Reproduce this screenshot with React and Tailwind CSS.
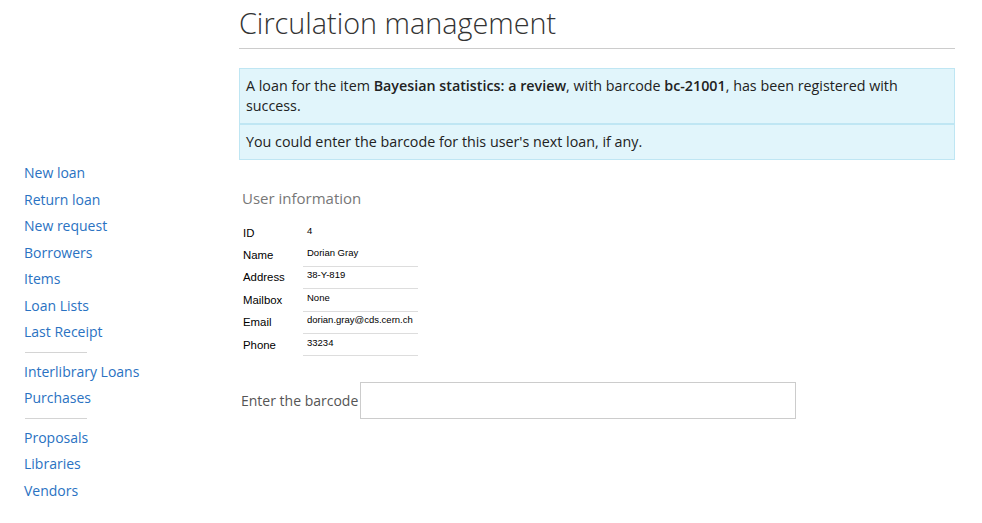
import React, { useState } from "react";

const groups = [
  ["New loan", "Return loan", "New request", "Borrowers", "Items", "Loan Lists", "Last Receipt"],
  ["Interlibrary Loans", "Purchases"],
  ["Proposals", "Libraries", "Vendors"],
];

const userInfo = [
  ["ID", "4"],
  ["Name", "Dorian Gray"],
  ["Address", "38-Y-819"],
  ["Mailbox", "None"],
  ["Email", "dorian.gray@cds.cern.ch"],
  ["Phone", "33234"],
];

const Sidebar = () => (
  <nav className="w-[239px] shrink-0 pl-[24px] pt-[160px]">
    {groups.map((links, i) => (
      <div key={i}>
        {i > 0 && <div className="my-[6px] ml-[1px] h-px w-[62px] bg-[#d4d4d4]"></div>}
        {links.map((l) => (
          <a key={l} href="#" className="block leading-[26.5px] text-[14px] text-[#2a72c2]">
            {l}
          </a>
        ))}
      </div>
    ))}
  </nav>
);

const App = () => {
  const [barcode, setBarcode] = useState("");

  return (
    <div className="flex min-h-[523px] bg-white font-['Open_Sans',sans-serif] text-[#333]">
      <Sidebar />
      <main className="w-[716px] shrink-0">
        <h1 className="border-b border-[#cccccc] pt-[2px] pb-[5px] text-[28.8px] font-light leading-[41px] text-[#333]">
          Circulation management
        </h1>

        <div className="mt-[19px] text-[14.3px] leading-[20px] text-[#222]">
          <div className="border border-[#bfe6f3] bg-[#e1f5fb] py-[7px] pr-[10px] pl-[6px]">
            A loan for the item <b className="font-semibold">Bayesian statistics: a review</b>, with barcode{" "}
            <b className="font-semibold">bc-21001</b>, has been registered with success.
          </div>
          <div className="border border-[#bfe6f3] bg-[#e1f5fb] py-[7px] pr-[10px] pl-[6px]">
            You could enter the barcode for this user's next loan, if any.
          </div>
        </div>

        <h2 className="mt-[28px] pl-[3px] text-[15px] leading-[20px] text-[#777]">User information</h2>

        <div className="mt-[14px] grid w-[179px] grid-cols-[64px_115px] font-['Liberation_Sans',Arial,sans-serif] text-black">
          {userInfo.map(([label, value], i) => (
            <React.Fragment key={label}>
              <div className="h-[22.4px] pl-[4px] pt-[3.7px] text-[11.4px] leading-[14px]">{label}</div>
              <div
                className={
                  "h-[22.4px] pl-[4px] pt-[2.6px] text-[9.5px] leading-[12px] " +
                  (i > 0 ? "border-b border-[#dddddd]" : "")
                }
              >
                {value}
              </div>
            </React.Fragment>
          ))}
        </div>

        <div className="mt-[26px] flex items-center gap-[2px]">
          <label className="pl-[2px] text-[14px] text-[#555]">Enter the barcode</label>
          <input
            type="text"
            value={barcode}
            onChange={(e) => setBarcode(e.target.value)}
            className="h-[37px] w-[436px] border border-[#cccccc] bg-white px-2 outline-none"
          />
        </div>
      </main>
    </div>
  );
};

export default App;
